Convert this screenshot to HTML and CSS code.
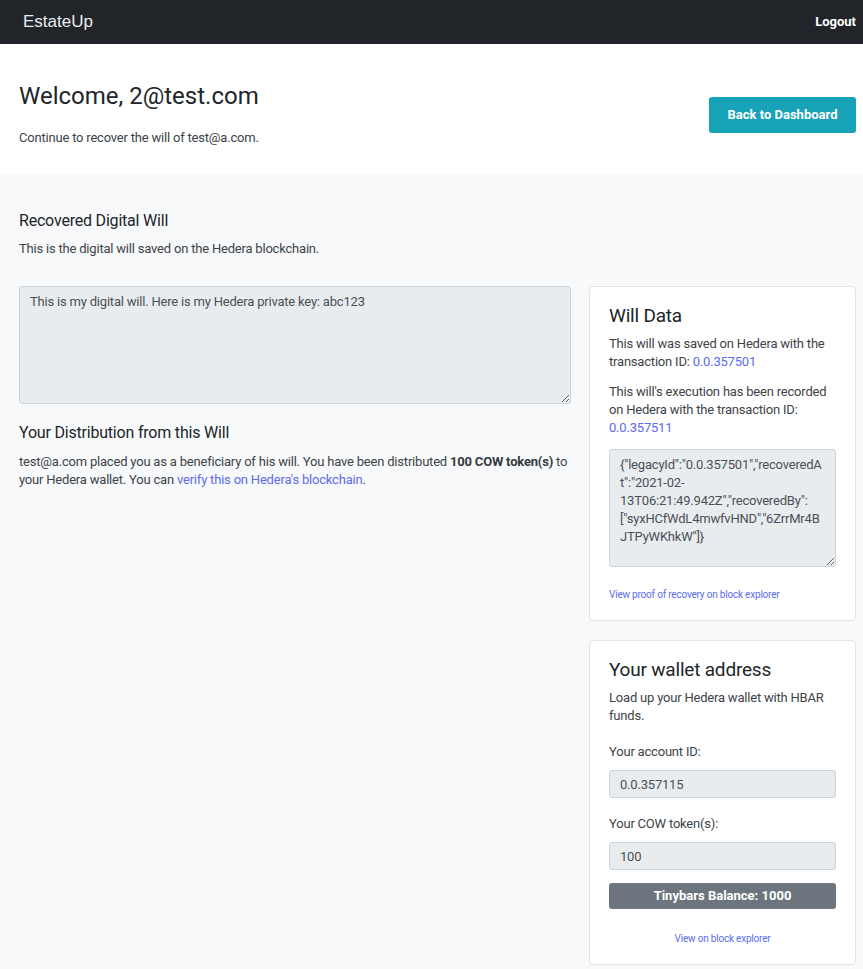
FILE: index.html
```html
<!DOCTYPE html>
<html lang="en">
<head>
<meta charset="utf-8">
<title>EstateUp</title>
<link rel="stylesheet" href="styles.css">
</head>
<body>
<nav class="navbar">
  <a class="brand" href="#">EstateUp</a>
  <a class="logout" href="#">Logout</a>
</nav>
<header class="hero">
  <div class="hero-text">
    <h1>Welcome, 2@test.com</h1>
    <p>Continue to recover the will of test@a.com.</p>
  </div>
  <a class="btn btn-info" href="#">Back to Dashboard</a>
</header>
<main class="main">
  <h5 class="section-title">Recovered Digital Will</h5>
  <p class="lead-text">This is the digital will saved on the Hedera blockchain.</p>
  <div class="columns">
    <div class="left">
      <textarea class="field will-text" readonly>This is my digital will. Here is my Hedera private key: abc123</textarea>
      <h5 class="sub-title">Your Distribution from this Will</h5>
      <p class="body-text">test@a.com placed you as a beneficiary of his will. You have been distributed <b>100 COW token(s)</b> to your Hedera wallet. You can <a href="#">verify this on Hedera's blockchain</a>.</p>
    </div>
    <aside class="right">
      <section class="card">
        <h4 class="card-title">Will Data</h4>
        <p>This will was saved on Hedera with the transaction ID: <a href="#">0.0.357501</a></p>
        <p>This will's execution has been recorded on Hedera with the transaction ID: <a href="#">0.0.357511</a></p>
        <textarea class="field json-text" readonly>{"legacyId":"0.0.357501","recoveredAt":"2021-02-13T06:21:49.942Z","recoveredBy":["syxHCfWdL4mwfvHND","6ZrrMr4BJTPyWKhkW"]}</textarea>
        <a class="small-link" href="#">View proof of recovery on block explorer</a>
      </section>
      <section class="card">
        <h4 class="card-title">Your wallet address</h4>
        <p class="intro">Load up your Hedera wallet with HBAR funds.</p>
        <label class="label">Your account ID:</label>
        <input class="field input" type="text" value="0.0.357115" readonly>
        <label class="label">Your COW token(s):</label>
        <input class="field input last" type="text" value="100" readonly>
        <div class="balance">Tinybars Balance: 1000</div>
        <a class="small-link center" href="#">View on block explorer</a>
      </section>
    </aside>
  </div>
</main>
</body>
</html>
```

FILE: styles.css
```css
* { box-sizing: border-box; }
html, body { margin: 0; padding: 0; }
body {
  font-family: "Roboto", "Noto Sans", sans-serif;
  font-size: 13px;
  line-height: 18px;
  letter-spacing: -0.2px;
  color: #3d4349;
  background: #f8f9fa;
}
a { color: #5b6cf0; text-decoration: none; }

.navbar {
  height: 44px;
  background: #212529;
  display: flex;
  align-items: center;
  justify-content: space-between;
  padding: 0 7px 0 23px;
}
.brand {
  font-family: "Liberation Sans", Arial, sans-serif;
  letter-spacing: 0;
  color: #e9ecef;
  font-size: 17px;
}
.logout {
  color: #fff;
  font-weight: 700;
  font-size: 13px;
  letter-spacing: 0;
}

.hero {
  background: #fff;
  display: flex;
  align-items: center;
  justify-content: space-between;
  padding: 38px 7px 27px 19px;
}
.hero h1 {
  margin: 0;
  font-size: 24px;
  line-height: 29px;
  font-weight: 400;
  letter-spacing: 0;
  color: #212529;
}
.hero p { margin: 18px 0 0; }
.btn {
  display: inline-flex;
  align-items: center;
  justify-content: center;
  height: 36px;
  width: 147px;
  white-space: nowrap;
  border-radius: 3px;
  font-weight: 700;
  letter-spacing: 0;
  color: #fff;
}
.btn-info { background: #17a2b8; }

.main { padding: 37px 7px 3px 19px; }
.section-title {
  margin: 0;
  font-size: 16px;
  line-height: 20px;
  font-weight: 400;
  color: #212529;
}
.lead-text { margin: 9px 0 28px; }

.columns {
  display: grid;
  grid-template-columns: 552px 267px;
  column-gap: 18px;
  align-items: start;
}

.field {
  display: block;
  width: 100%;
  background: #e9ecef;
  border: 1px solid #ced4da;
  border-radius: 3px;
  font-family: inherit;
  font-size: 13px;
  line-height: 18px;
  letter-spacing: -0.2px;
  color: #495057;
}
textarea.field {
  resize: vertical;
  padding: 6px 10px;
  margin: 0;
}
.will-text { height: 118px; }
.sub-title {
  margin: 19px 0 10px;
  font-size: 16px;
  line-height: 20px;
  font-weight: 400;
  color: #212529;
}
.body-text { margin: 0; }
.body-text b { font-weight: 700; color: #343a40; }

.card {
  background: #fff;
  border: 1px solid #e2e4e7;
  border-radius: 4px;
  padding: 17px 19px 19px;
  margin-bottom: 19px;
}
.card-title {
  margin: 0 0 8px;
  font-size: 19px;
  line-height: 23px;
  font-weight: 400;
  color: #212529;
}
.card p { margin: 0 0 12px; }
textarea.json-text { height: 118px; margin-bottom: 22px; }
.small-link {
  display: block;
  font-size: 10px;
  line-height: 12px;
}
.small-link.center { text-align: center; }
.card p.intro { margin-bottom: 18px; }
.label { display: block; margin-bottom: 9px; }
.input {
  height: 28px;
  padding: 0 10px;
  margin-bottom: 17px;
}
.input.last { margin-bottom: 13px; }
.balance {
  height: 26px;
  background: #6c757d;
  color: #fff;
  font-weight: 700;
  letter-spacing: 0;
  border-radius: 3px;
  display: flex;
  align-items: center;
  justify-content: center;
  margin-bottom: 24px;
}
```
